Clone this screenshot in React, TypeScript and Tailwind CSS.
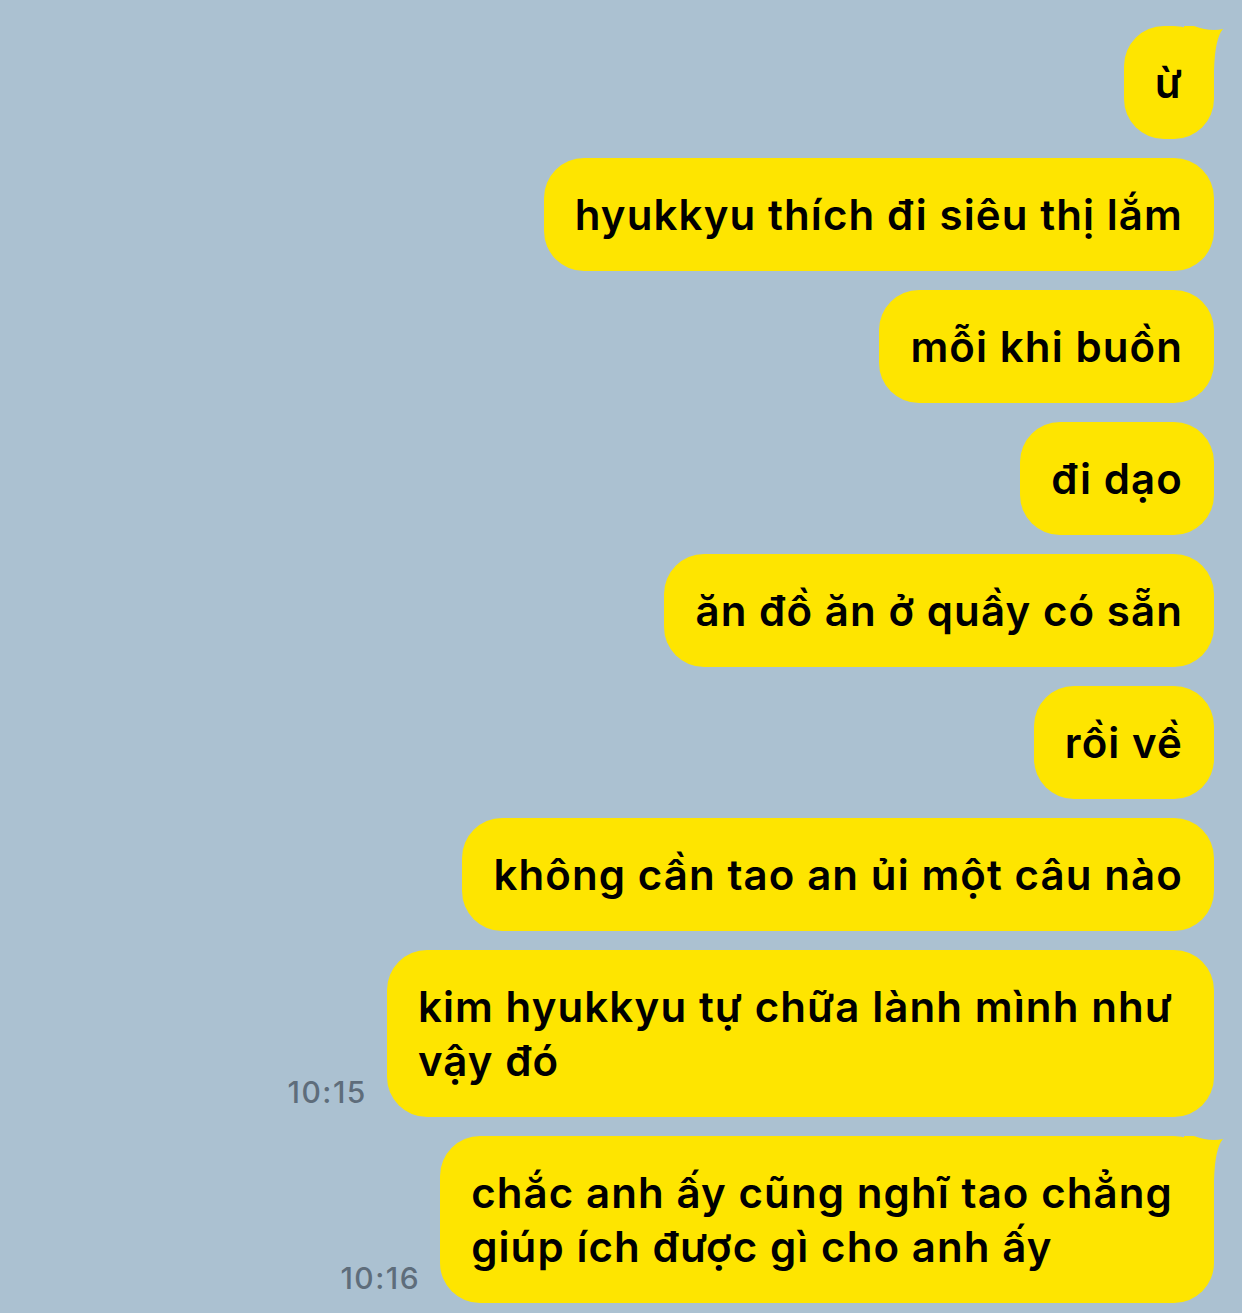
import React from "react";

type Msg = { lines: string[]; time?: string; tail?: boolean };

const messages: Msg[] = [
    { lines: ["ừ"], tail: true },
    { lines: ["hyukkyu thích đi siêu thị lắm"] },
    { lines: ["mỗi khi buồn"] },
    { lines: ["đi dạo"] },
    { lines: ["ăn đồ ăn ở quầy có sẵn"] },
    { lines: ["rồi về"] },
    { lines: ["không cần tao an ủi một câu nào"] },
    { lines: ["kim hyukkyu tự chữa lành mình như", "vậy đó"], time: "10:15" },
    { lines: ["chắc anh ấy cũng nghĩ tao chẳng", "giúp ích được gì cho anh ấy"], time: "10:16", tail: true },
];

const Tail: React.FC = () => (
    <svg
        className="absolute top-0 right-[-10px]"
        width="40"
        height="50"
        viewBox="0 0 40 50"
    >
        <path d="M0 0 L10 0 Q26 6 39 3 Q31 12 30 44 L30 50 L0 50 Z" fill="#fee500" />
    </svg>
);

const Bubble: React.FC<{ msg: Msg }> = ({ msg }) => {
    const multi = msg.lines.length > 1;
    return (
        <div className="flex items-end gap-[20px]">
            {msg.time && (
                <span className="mb-[10px] text-[30px] leading-none font-medium tracking-[1.5px] text-[#5e6d7b]">
                    {msg.time}
                </span>
            )}
            <div className="relative rounded-[40px] bg-[#fee500] px-[31px] pt-[30px] pb-[29px] text-[42px] leading-[54px] font-semibold tracking-[1.1px] text-black">
                {msg.tail && <Tail />}
                <div className={multi ? "relative pr-[10px]" : "relative"}>
                    {msg.lines.map((l, i) => (
                        <div key={i} className="whitespace-nowrap">
                            {l}
                        </div>
                    ))}
                </div>
            </div>
        </div>
    );
};

const App: React.FC = () => {
    return (
        <div
            className="flex min-h-[1313px] w-[1242px] flex-col items-end gap-[19px] overflow-hidden bg-[#abc1d1] pt-[26px] pr-[28px]"
            style={{ fontFamily: "Inter, 'Noto Sans', sans-serif" }}
        >
            {messages.map((m, i) => (
                <Bubble key={i} msg={m} />
            ))}
        </div>
    );
};

export default App;
